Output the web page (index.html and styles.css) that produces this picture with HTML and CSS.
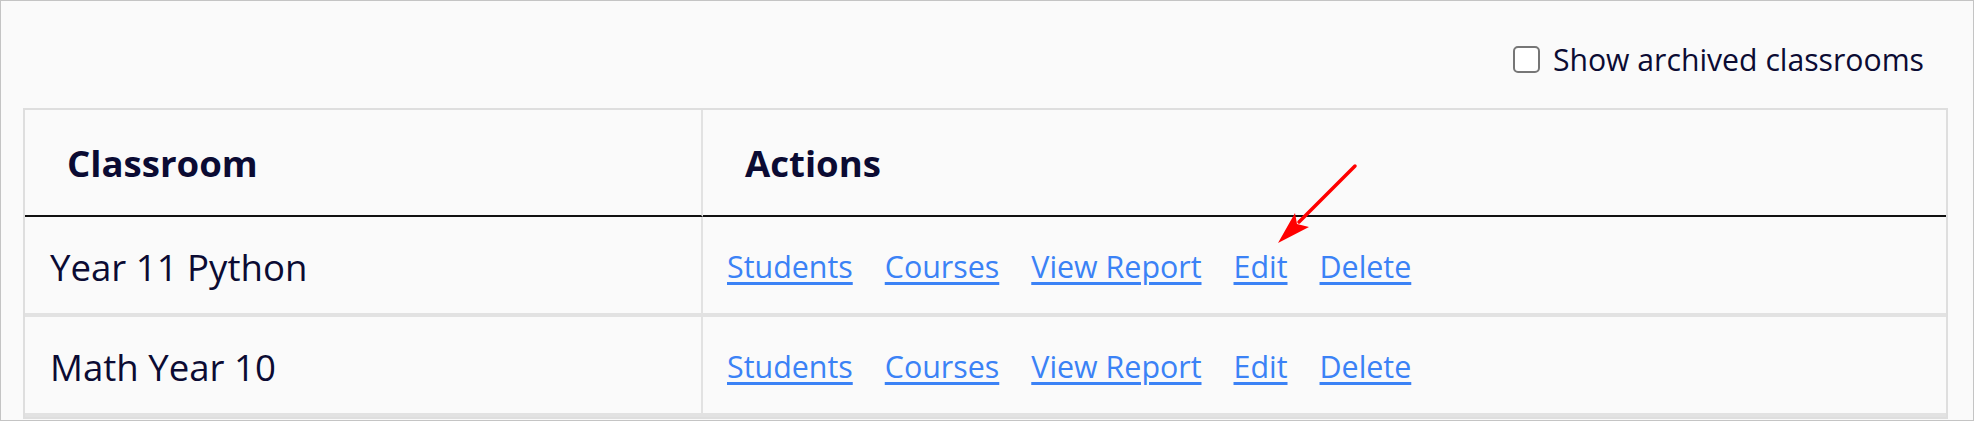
FILE: index.html
```html
<!DOCTYPE html>
<html lang="en">
<head>
  <meta charset="UTF-8" />
  <meta name="viewport" content="width=device-width, initial-scale=1.0"/>
  <title>Classrooms</title>
  <link rel="stylesheet" href="styles.css">
</head>
<body>

  <!-- Filter above the table -->
  <div class="toolbar">
    <label class="archived">
      <input type="checkbox" id="showArchived">
      Show archived classrooms
    </label>
  </div>

  <table class="classrooms">
    <thead>
      <tr>
        <th class="name-col">Classroom</th>
        <th>Actions</th>
      </tr>
    </thead>
    <tbody>
      <tr>
        <td class="name-col">Year 11 Python</td>
        <td>
          <div class="actions">
            <a href="#">Students</a>
            <a href="#">Courses</a>
            <a href="#">View Report</a>
            <a href="#">Edit</a>
            <a href="#">Delete</a>
          </div>
        </td>
      </tr>
      <tr>
        <td class="name-col">Math Year 10</td>
        <td>
          <div class="actions">
            <a href="#">Students</a>
            <a href="#">Courses</a>
            <a href="#">View Report</a>
            <a href="#">Edit</a>
            <a href="#">Delete</a>
          </div>
        </td>
      </tr>
    </tbody>
  </table>

  <!-- Annotation arrow pointing at Edit -->
  <svg class="pointer" width="95" height="92" viewBox="0 0 95 92">
    <line x1="84" y1="7" x2="28" y2="63" stroke="#ff0000" stroke-width="3.5" stroke-linecap="round"/>
    <polygon points="7,84 24,54 26,65 38,68" fill="#ff0000"/>
  </svg>

</body>
</html>
```

FILE: styles.css
```css
body {
  margin: 0;
  width: 1974px;
  height: 421px;
  box-sizing: border-box;
  border: 1px solid #c4c4c4;
  background: #fafafa;
  font-family: "Open Sans", "Noto Sans", sans-serif;
  color: #0b0b33;
  padding: 0 25px 0 22px;
  position: relative;
  overflow: hidden;
}

.toolbar {
  height: 107px;
  box-sizing: border-box;
  padding: 10px 24px 0 0;
  display: flex;
  justify-content: flex-end;
  align-items: center;
}

.archived {
  display: flex;
  align-items: center;
  gap: 13px;
  font-size: 30.2px;
}

.archived input {
  appearance: none;
  width: 27px;
  height: 27px;
  margin: 0;
  border: 2px solid #767676;
  border-radius: 5px;
  background: #fff;
}

.classrooms {
  width: 100%;
  table-layout: fixed;
  border-collapse: separate;
  border-spacing: 0;
  border: 2px solid #dedede;
}

.classrooms th,
.classrooms td {
  box-sizing: border-box;
  text-align: left;
  vertical-align: middle;
  padding: 0 0 0 24px;
}

.classrooms th {
  height: 107px;
  padding-left: 42px;
  font-size: 36.6px;
  font-weight: bold;
  border-bottom: 2px solid #111;
}

.classrooms td {
  height: 100px;
  padding-top: 3px;
  font-size: 36.6px;
  border-bottom: 4px solid #e2e2e2;
}

.classrooms .name-col {
  width: 678px;
  border-right: 2px solid #e2e2e2;
}

.classrooms td.name-col {
  padding-left: 25px;
}

.actions {
  display: flex;
  gap: 32px;
  font-size: 30.4px;
}

.actions a {
  color: #3b82f6;
  text-decoration: underline;
  text-decoration-thickness: 3px;
  text-underline-offset: 4px;
}

.pointer {
  position: absolute;
  left: 1270px;
  top: 158px;
  pointer-events: none;
}
```
